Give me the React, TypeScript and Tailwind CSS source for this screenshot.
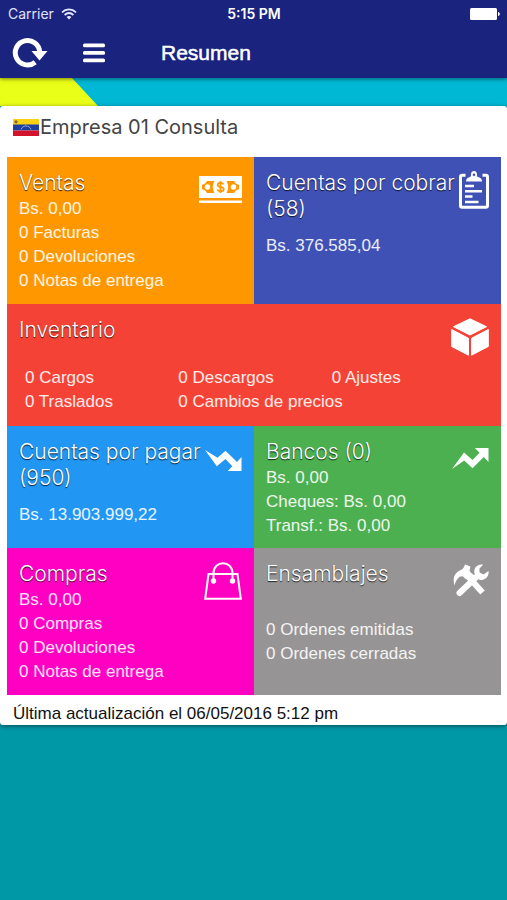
import type { ReactNode } from "react";

function RefreshIcon() {
  return (
    <svg viewBox="0 0 36 32" className="h-8 w-9" fill="none">
      <path d="M23.2 25.2A12.2 12.2 0 1 1 27.7 15.5" stroke="white" strokeWidth="5" />
      <path d="M19.500 14H35.500L27.500 23.500Z" fill="white" />
    </svg>
  );
}

function MenuIcon() {
  return (
    <svg viewBox="0 0 24 20" className="h-5 w-6" fill="white">
      <rect x="1" y="0.5" width="22" height="3.8" rx="1.5" />
      <rect x="1" y="8" width="22" height="3.8" rx="1.5" />
      <rect x="1" y="15.5" width="22" height="3.8" rx="1.5" />
    </svg>
  );
}

function WifiIcon() {
  return (
    <svg viewBox="0 0 16 12" className="h-3 w-4" fill="none" stroke="#e8e9ff" strokeWidth="1.8">
      <path d="M1 4.3C5 0.4 11 0.4 15 4.3" />
      <path d="M3.6 7C6.3 4.5 9.7 4.5 12.4 7" />
      <path d="M5.6 8.9C7 7.7 9 7.7 10.4 8.9L8 11.5Z" fill="#e8e9ff" stroke="none" />
    </svg>
  );
}

function BatteryIcon() {
  return (
    <svg viewBox="0 0 30 12" className="h-3 w-[30px]" fill="white">
      <rect x="0" y="0" width="27" height="12" rx="1.5" />
      <path d="M28 4C30.4 4.4 30.4 7.6 28 8Z" />
    </svg>
  );
}

function FlagIcon() {
  return (
    <svg viewBox="0 0 26 17" className="h-[17px] w-[26px]">
      <path d="M0 0H26V6H0Z" fill="#fbd116" />
      <path d="M0 5.5H26V11.5H0Z" fill="#1d3f9f" />
      <path d="M0 11.5H26V17H0Z" fill="#d3122c" />
      <path d="M8 10.5C9.5 5.8 16.5 5.8 18 10.5" stroke="#8fa3dc" strokeWidth="1" fill="none" />
      <circle cx="3" cy="2.8" r="1.6" fill="#7d6a2a" />
    </svg>
  );
}

function CashIcon() {
  return (
    <svg viewBox="0 0 43 27" className="h-[27px] w-[43px]">
      <path d="M0 0H43V22H0Z" fill="white" />
      <path d="M8 5H15.500C13.200 9 13.200 13 15.500 17H8C7 15 5.500 13.700 3 13.200V8.800C5.500 8.300 7 7 8 5Z" fill="#ff9800" />
      <path d="M35 5H27.500C29.800 9 29.800 13 27.500 17H35C36 15 37.500 13.700 40 13.200V8.800C37.500 8.300 36 7 35 5Z" fill="#ff9800" />
      <circle cx="8.5" cy="11" r="2.7" fill="white" />
      <circle cx="34.5" cy="11" r="2.7" fill="white" />
      <path d="M24.600 8.300C24 7.200 22.800 6.800 21.500 6.800C19.800 6.800 18.600 7.600 18.600 8.900C18.600 11.800 24.700 10 24.700 13.200C24.700 14.500 23.300 15.300 21.600 15.300C20 15.300 18.700 14.700 18.200 13.500M21.500 5V17" fill="none" stroke="#ff9800" strokeWidth="1.7" />
      <path d="M0 24.500H43V27H0Z" fill="white" />
    </svg>
  );
}

function ClipboardIcon() {
  return (
    <svg viewBox="0 0 30 38" className="h-[38px] w-[30px]" fill="none" stroke="white">
      <path d="M6.500 4.200H3.200Q1.500 4.200 1.500 6V34.500Q1.500 36.300 3.200 36.300H26.800Q28.500 36.300 28.500 34.500V6Q28.500 4.200 26.800 4.200H23.500" strokeWidth="3" />
      <path d="M7 10.500C7 7.500 9 6.500 11 6C11.800 5.700 12 5 12 3.500C12 1.300 13.200 0 15 0C16.800 0 18 1.300 18 3.500C18 5 18.200 5.700 19 6C21 6.500 23 7.500 23 10.500Z" fill="white" stroke="none" />
      <circle cx="15" cy="3.7" r="1.3" fill="#3f51b5" stroke="none" />
      <path d="M6 15H15M6 20.300H23M6 25.500H13.500M6 31H19.500" strokeWidth="2.4" />
    </svg>
  );
}

function CubeIcon() {
  return (
    <svg viewBox="0 0 38 38" className="h-[38px] w-[38px]" fill="white" stroke="white" strokeWidth="1" strokeLinejoin="round">
      <path d="M19 0.800L35.500 8.700L19 17L2.500 8.700Z" />
      <path d="M0.700 11.500L17.500 20.300V37.200L0.700 28.500Z" />
      <path d="M37.300 11.500L20.500 20.300V37.200L37.300 28.500Z" />
    </svg>
  );
}

function GraphDownIcon() {
  return (
    <svg viewBox="0 0 37 21" className="h-[21px] w-[37px]" fill="white">
      <path d="M0 0L12.500 7.800L20.500 0.800L32 12L36.500 7V21H22.800L27.300 16.300L20.500 9L11.800 16.300Z" />
    </svg>
  );
}

function GraphUpIcon() {
  return (
    <svg viewBox="0 0 37 21" className="h-[21px] w-[37px]" fill="white">
      <path d="M0 21L12 4.500L20.500 12L27.500 4.700L22.800 0H36.500V14L31.800 9L20.500 20.200L12.200 12.500Z" />
    </svg>
  );
}

function BagIcon() {
  return (
    <svg viewBox="0 0 38 38" className="h-[38px] w-[38px]" fill="none" stroke="white" strokeWidth="2">
      <path d="M4.500 12H33.500L36.800 36.800H1.200Z" />
      <path d="M9.500 19V11C9.500 -2 28.500 -2 28.500 11V19" />
      <circle cx="9.5" cy="19" r="2.7" fill="white" stroke="none" />
      <circle cx="28.5" cy="19" r="2.7" fill="white" stroke="none" />
    </svg>
  );
}

function ToolsIcon() {
  return (
    <svg viewBox="0 0 36 34" className="h-[34px] w-9" fill="white">
      {/* hammer */}
      <path d="M1.500 21.500C-0.500 15 1 8.500 8 6C10.500 5 11 3 12 0.500L17.500 2.500L16.500 6.500L19 10.500L13 15.500L10 12.500C6.500 11.500 3.500 15 1.500 21.500Z" />
      <path d="M20.500 18.500L29.500 28.500" stroke="white" strokeWidth="6" />
      <path d="M13 14.500L16 18L22 12L18.500 9Z" />
      {/* wrench */}
      <path d="M25 11.500L6.500 29" stroke="white" strokeWidth="6" strokeLinecap="round" />
      <path d="M30 0.800C24 -0.500 19.500 5 22 11L26.500 16C32 16.500 36.500 12.500 35.500 7L30.500 10.500L26.500 8.500L26.500 4.500Z" />
    </svg>
  );
}

type TileProps = {
  title: string;
  color: string;
  icon: ReactNode;
  children: ReactNode;
};

function Tile({ title, color, icon, children }: TileProps) {
  return (
    <section className={`relative px-3 pt-[13px] ${color}`}>
      <div className="absolute right-3 top-[14px]">{icon}</div>
      <h2 className="pr-8 font-[Inter,sans-serif] text-[21px] font-light leading-[26px] [text-shadow:0_1px_1px_rgba(0,0,0,0.8)]">
        {title}
      </h2>
      <div className="pt-px text-[17px] leading-6 text-white/90">{children}</div>
    </section>
  );
}

export default function App() {
  return (
    <div className="flex min-h-screen flex-col bg-[#0097a7] font-['Liberation_Sans',Arial,sans-serif]">
      <header className="relative z-10 bg-[#1a237e] text-white shadow-[0_1px_4px_rgba(0,0,0,0.5)]">
        <div className="grid h-[27px] grid-cols-3 items-center pl-2 pr-[7px] font-[Inter,sans-serif] text-sm">
          <div className="flex items-center gap-[7px] text-[#e0e2fa]">
            <span>Carrier</span>
            <WifiIcon />
          </div>
          <span className="text-center font-semibold">5:15 PM</span>
          <div className="flex justify-end">
            <BatteryIcon />
          </div>
        </div>
        <div className="flex h-[51px] items-center pl-3">
          <button type="button" aria-label="Actualizar" className="mr-[34px]">
            <RefreshIcon />
          </button>
          <button type="button" aria-label="Menú" className="mr-[55px]">
            <MenuIcon />
          </button>
          <h1 className="text-[21px] [-webkit-text-stroke:0.5px_white]">Resumen</h1>
        </div>
      </header>

      <div className="h-7 bg-[#00b8d4]">
        <svg viewBox="0 0 98 28" className="h-7 w-[98px]">
          <path d="M0 0H72L98 28H0Z" fill="#eaff17" />
        </svg>
      </div>

      <main className="rounded-[3px] bg-white shadow-[0_1px_4px_rgba(0,0,0,0.5)]">
        <div className="flex h-[51px] items-start gap-px pl-[13px] pt-2 text-[#444]">
          <div className="pt-[5px]">
            <FlagIcon />
          </div>
          <p className="font-[Inter,sans-serif] text-[20px] leading-[26px]">Empresa 01 Consulta</p>
        </div>

        <div className="ml-[7px] mr-[6px] grid grid-cols-2 grid-rows-[147px_122px_122px_147px] text-white">
          <Tile title="Ventas" color="bg-[#ff9800]" icon={<div className="pt-[5px]"><CashIcon /></div>}>
            <p>Bs. 0,00</p>
            <p>0 Facturas</p>
            <p>0 Devoluciones</p>
            <p>0 Notas de entrega</p>
          </Tile>
          <Tile title="Cuentas por cobrar (58)" color="bg-[#3f51b5]" icon={<ClipboardIcon />}>
            <p className="pt-[11px]">Bs. 376.585,04</p>
          </Tile>

          <div className="col-span-2 grid">
            <Tile title="Inventario" color="bg-[#f44336]" icon={<CubeIcon />}>
              <div className="grid grid-cols-3 pl-[6px] pr-1 pt-[22px]">
                <p>0 Cargos</p>
                <p>0 Descargos</p>
                <p>0 Ajustes</p>
                <p>0 Traslados</p>
                <p className="col-span-2">0 Cambios de precios</p>
              </div>
            </Tile>
          </div>

          <Tile title="Cuentas por pagar (950)" color="bg-[#2196f3]" icon={<div className="pt-[10px]"><GraphDownIcon /></div>}>
            <p className="pt-[11px]">Bs. 13.903.999,22</p>
          </Tile>
          <Tile title="Bancos (0)" color="bg-[#4caf50]" icon={<div className="pt-2"><GraphUpIcon /></div>}>
            <p>Bs. 0,00</p>
            <p>Cheques: Bs. 0,00</p>
            <p>Transf.: Bs. 0,00</p>
          </Tile>

          <Tile title="Compras" color="bg-[#ff00c3]" icon={<BagIcon />}>
            <p>Bs. 0,00</p>
            <p>0 Compras</p>
            <p>0 Devoluciones</p>
            <p>0 Notas de entrega</p>
          </Tile>
          <Tile title="Ensamblajes" color="bg-[#969494]" icon={<div className="pt-[2px]"><ToolsIcon /></div>}>
            <div className="pt-[30px]">
              <p>0 Ordenes emitidas</p>
              <p>0 Ordenes cerradas</p>
            </div>
          </Tile>
        </div>

        <p className="h-[30px] pl-[13px] pt-[7px] text-[17px] leading-6 text-[#111]">
          Última actualización el 06/05/2016 5:12 pm
        </p>
      </main>
    </div>
  );
}
